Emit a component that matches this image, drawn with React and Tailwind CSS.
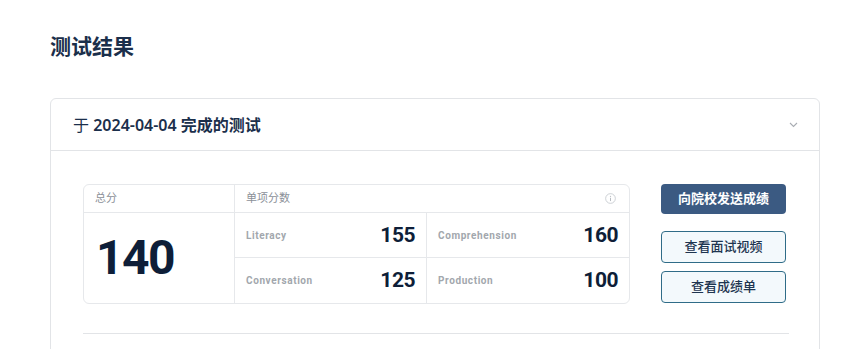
import React from "react";

const scores = [
  [
    { label: "Literacy", value: 155 },
    { label: "Comprehension", value: 160 },
  ],
  [
    { label: "Conversation", value: 125 },
    { label: "Production", value: 100 },
  ],
];

function InfoIcon() {
  return (
    <svg width="11" height="11" viewBox="0 0 12 12" fill="none">
      <circle cx="6" cy="6" r="5.3" stroke="#c4c8cd" strokeWidth="0.9" />
      <circle cx="6" cy="3.6" r="0.7" fill="#b8bcc2" />
      <path d="M6 5.2v3.6" stroke="#b8bcc2" strokeWidth="1.1" />
    </svg>
  );
}

function Chevron() {
  return (
    <svg width="9" height="6" viewBox="0 0 9 6" fill="none">
      <path d="M1 1l3.5 3.5L8 1" stroke="#a9adb3" strokeWidth="1.1" />
    </svg>
  );
}

function ScoreTable() {
  return (
    <div className="w-[547px] border border-[#e6e8eb] rounded-md flex">
      <div className="w-[151px] border-r border-[#e6e8eb] flex flex-col">
        <div className="h-[28px] border-b border-[#e6e8eb] px-[11px] flex items-center text-[11px] text-[#8b9098]">
          总分
        </div>
        <div className="flex-1 flex items-center px-[12px] font-['Roboto'] font-bold text-[48px] leading-none text-[#0e1e38] tracking-[-1.5px]">
          140
        </div>
      </div>
      <div className="flex-1 flex flex-col">
        <div className="h-[28px] border-b border-[#e6e8eb] px-[11px] flex items-center justify-between text-[11px] text-[#8b9098]">
          <span>单项分数</span>
          <span className="mr-[2px]">
            <InfoIcon />
          </span>
        </div>
        {scores.map((row, i) => (
          <div
            key={i}
            className={`h-[45px] flex ${i === 0 ? "border-b border-[#e6e8eb]" : ""}`}
          >
            {row.map((s, j) => (
              <div
                key={s.label}
                className={`flex items-center justify-between px-[11px] ${
                  j === 0 ? "w-[192px] border-r border-[#e6e8eb]" : "flex-1"
                }`}
              >
                <span className="font-['Roboto'] font-bold text-[10px] tracking-[0.6px] text-[#a2a7ad]">
                  {s.label}
                </span>
                <span className="font-['Roboto'] font-bold text-[21px] leading-none text-[#0e1e38] tracking-[-0.5px]">
                  {s.value}
                </span>
              </div>
            ))}
          </div>
        ))}
      </div>
    </div>
  );
}

export default function App() {
  return (
    <div className="min-h-screen bg-white font-['Noto_Sans','Noto_Sans_CJK_SC',sans-serif] px-[50px] pt-[32px]">
      <h1 className="text-[21px] leading-[28px] font-bold text-[#1b2f4b]">测试结果</h1>

      <div className="mt-[38px] w-[770px] border border-[#e2e4e7] rounded-md">
        <div className="h-[52px] border-b border-[#e2e4e7] pl-[22px] pr-[21px] flex items-center justify-between">
          <div className="text-[16px] text-[#1b2f4b]">
            <span className="font-normal">于 </span>
            <span className="font-semibold">2024-04-04 完成的测试</span>
          </div>
          <Chevron />
        </div>

        <div className="pt-[33px] pl-[32px] pr-[30px] pb-[20px]">
          <div className="flex">
            <ScoreTable />
            <div className="ml-[31px] w-[125px] flex flex-col">
              <button className="h-[30px] rounded bg-[#3b5a82] text-white text-[13px] font-semibold">
                向院校发送成绩
              </button>
              <button className="mt-[17px] h-[32px] rounded border border-[#2f6c88] bg-[#f3f9fc] text-[#1e3550] text-[13px] font-medium">
                查看面试视频
              </button>
              <button className="mt-[8px] h-[32px] rounded border border-[#2f6c88] bg-[#f3f9fc] text-[#1e3550] text-[13px] font-medium">
                查看成绩单
              </button>
            </div>
          </div>
          <div className="mt-[29px] border-t border-[#e2e4e7]" />
        </div>
      </div>
    </div>
  );
}
